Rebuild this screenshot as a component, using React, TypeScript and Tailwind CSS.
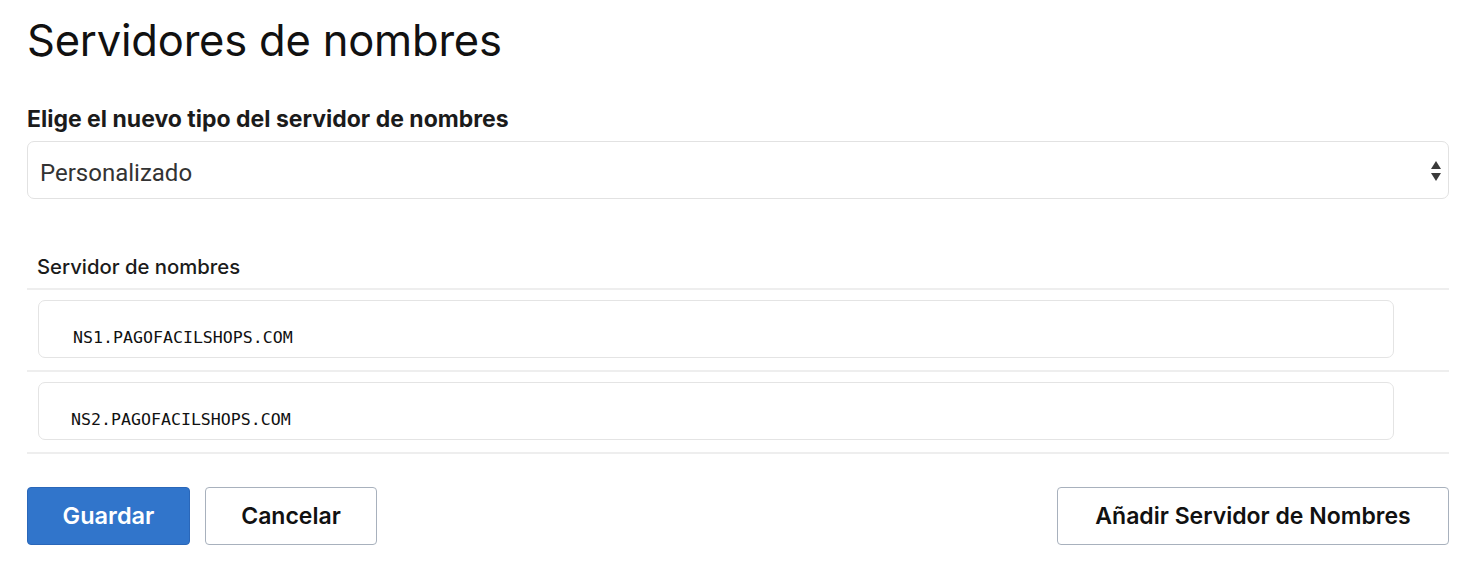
import { useState } from "react";

const servers = ["NS1.PAGOFACILSHOPS.COM", "NS2.PAGOFACILSHOPS.COM"];

export default function App() {
  const [tipo, setTipo] = useState("custom");

  return (
    <div className="min-h-screen bg-white px-[27px] pt-[12px] font-['Inter',sans-serif] text-[#111]">
      <h1 className="text-[43.5px] leading-[56px] font-normal tracking-[-0.2px]">
        Servidores de nombres
      </h1>

      <label className="mt-[36px] block text-[23px] leading-[30px] font-bold text-[#1b1b1b]">
        Elige el nuevo tipo del servidor de nombres
      </label>

      <div className="relative mt-[7px]">
        <select
          value={tipo}
          onChange={(e) => setTipo(e.target.value)}
          className="h-[58px] w-full appearance-none rounded-[7px] border border-[#e2e2e2] bg-white pl-[12px] pt-[5px] font-['Roboto',sans-serif] text-[24px] text-[#333] outline-none"
        >
          <option value="default">Predeterminado</option>
          <option value="custom">Personalizado</option>
        </select>
        <svg
          className="pointer-events-none absolute right-[7px] top-[19px]"
          width="12"
          height="22"
          viewBox="0 0 12 22"
        >
          <path d="M6 1 L11 9 L1 9 Z" fill="#3a3a3a" />
          <path d="M1 13 L11 13 L6 21 Z" fill="#3a3a3a" />
        </svg>
      </div>

      <div className="mt-[56px]">
        <div className="px-[10px] pb-[9px] text-[20.3px] leading-[24px] font-medium text-[#1b1b1b]">
          Servidor de nombres
        </div>
        {servers.map((ns, i) => (
          <div
            key={ns}
            className="border-t-2 border-[#eeeeee] pt-[10px] pb-[12px] pl-[11px] pr-[55px] last:border-b-2"
          >
            <div
              className={`flex h-[58px] items-end rounded-[7px] border border-[#e4e4e4] pb-[9px] font-['DejaVu_Sans_Mono',monospace] text-[16.6px] leading-[20px] text-[#111] ${
                i === 0 ? "pl-[34px]" : "pl-[32px]"
              }`}
            >
              {ns}
            </div>
          </div>
        ))}
      </div>

      <div className="mt-[33px] flex items-center">
        <button className="h-[58px] w-[163px] rounded-[4px] border border-[#2a67b9] bg-[#3175cb] text-[23.5px] font-semibold text-white">
          Guardar
        </button>
        <button className="ml-[15px] h-[58px] w-[172px] rounded-[4px] border border-[#a8b1bd] bg-white text-[23px] font-semibold text-[#111]">
          Cancelar
        </button>
        <button className="ml-auto h-[58px] w-[392px] rounded-[4px] border border-[#a8b1bd] bg-white text-[23px] font-semibold text-[#111]">
          Añadir Servidor de Nombres
        </button>
      </div>
    </div>
  );
}
